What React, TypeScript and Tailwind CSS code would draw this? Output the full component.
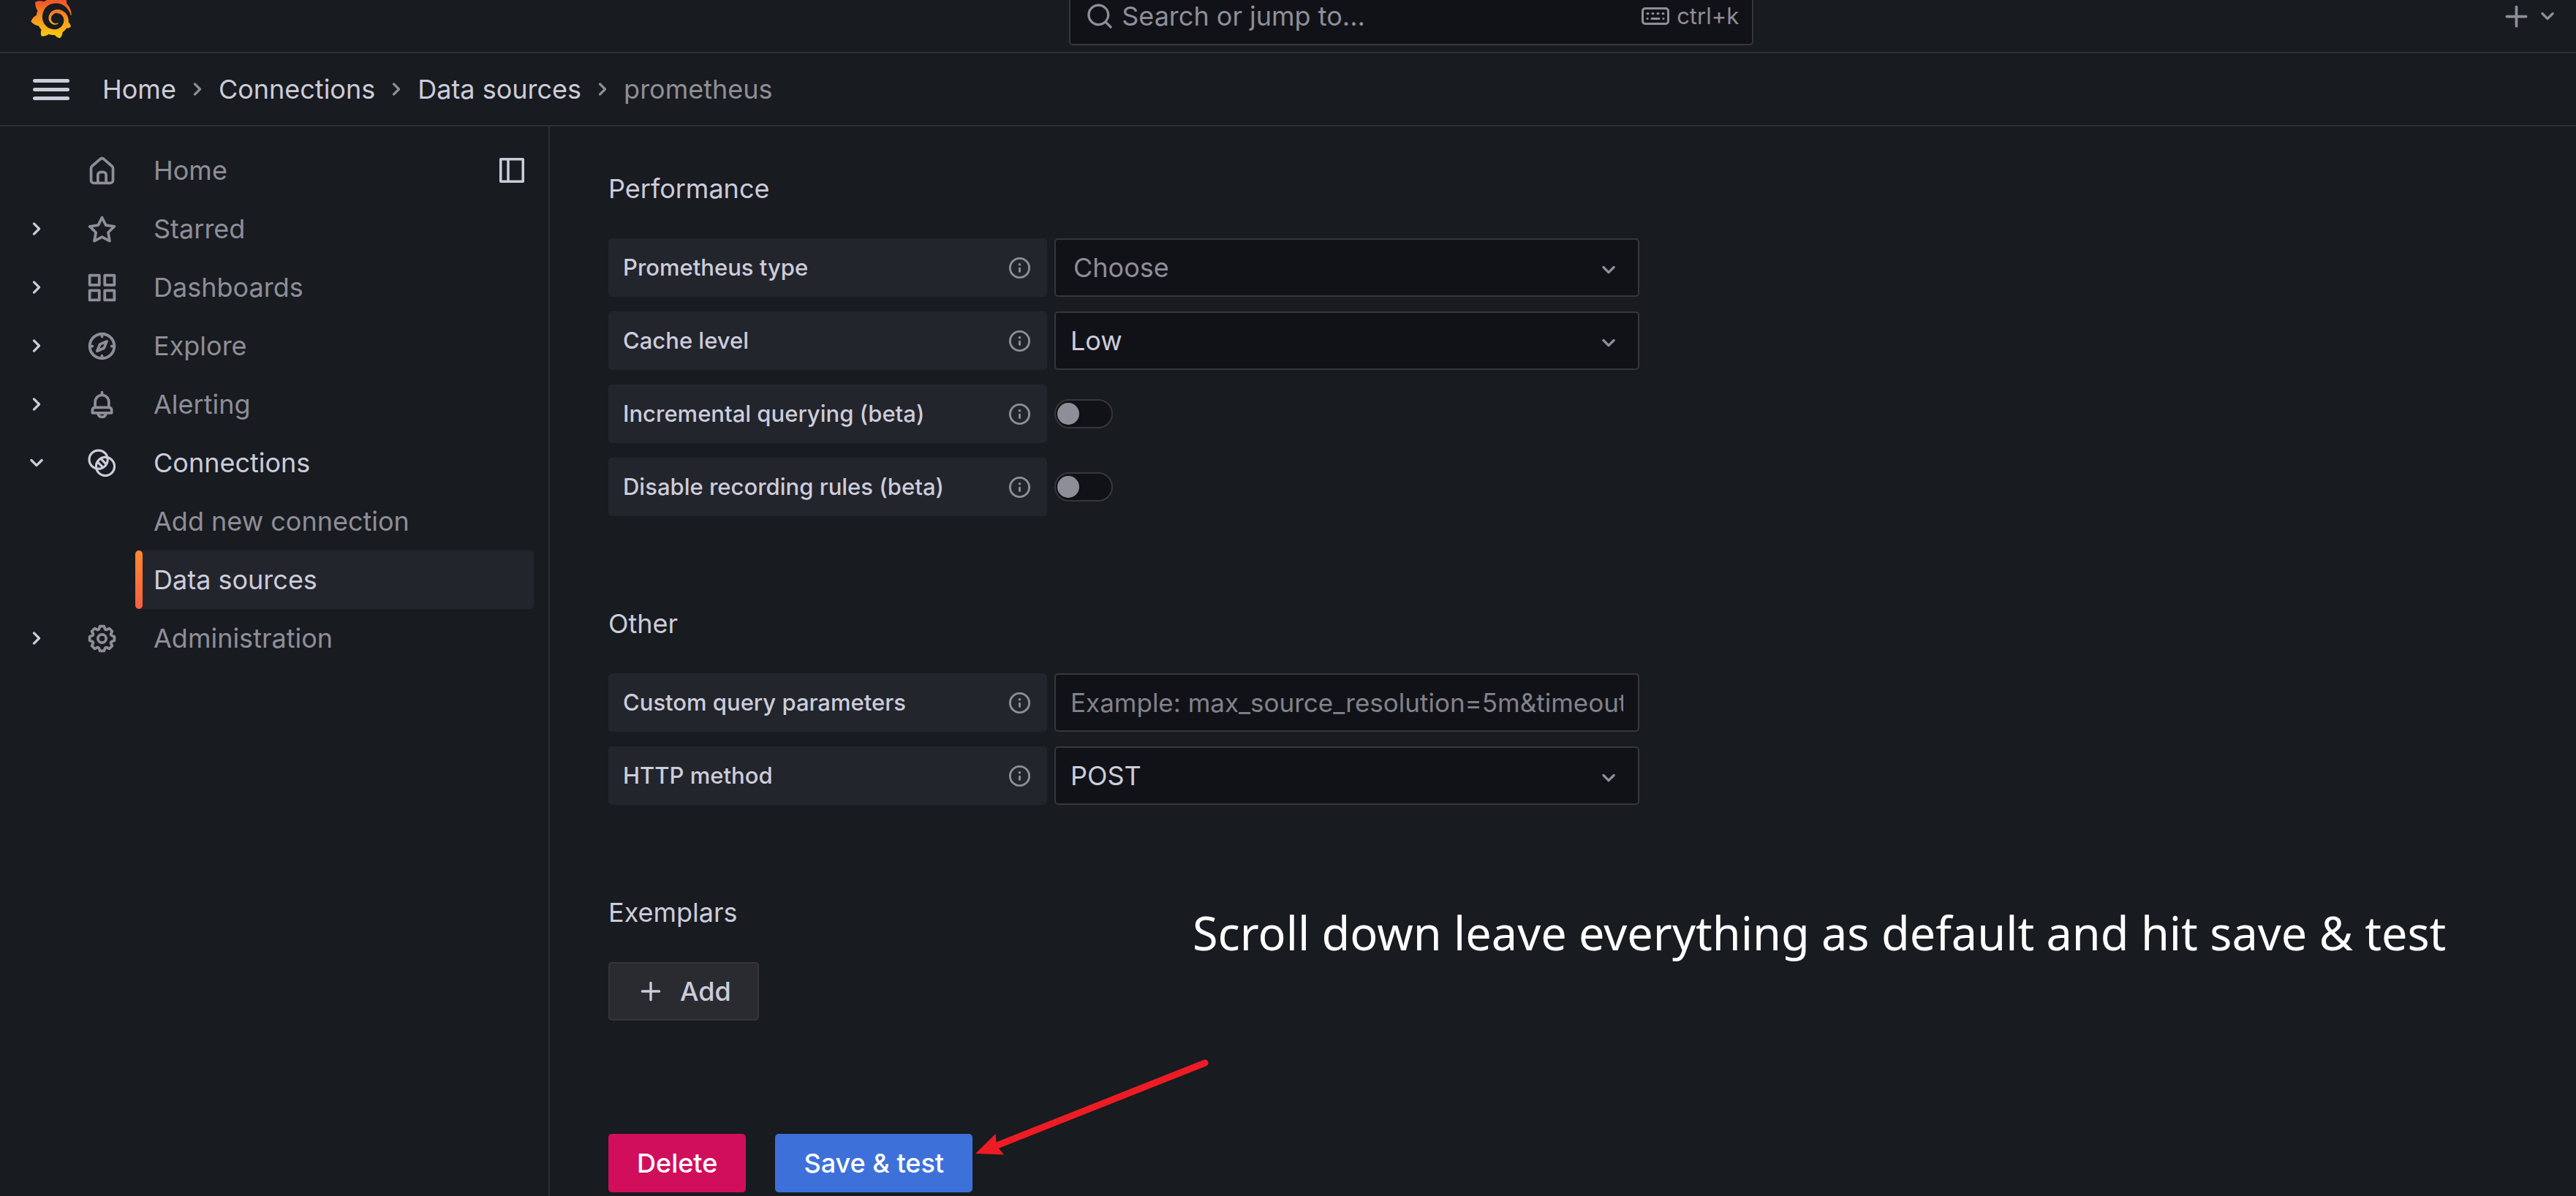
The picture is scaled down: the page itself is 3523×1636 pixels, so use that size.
import type { ReactNode } from "react";
import { SiGrafana } from "react-icons/si";

const paths = {
  home: "M20,8h0L14,2.74a3,3,0,0,0-4,0L4,8a3,3,0,0,0-1,2.26V19a3,3,0,0,0,3,3H18a3,3,0,0,0,3-3V10.25A3,3,0,0,0,20,8ZM14,20H10V15a1,1,0,0,1,1-1h2a1,1,0,0,1,1,1Zm5-1a1,1,0,0,1-1,1H16V15a3,3,0,0,0-3-3H11a3,3,0,0,0-3,3v5H6a1,1,0,0,1-1-1V10.25a1,1,0,0,1,.34-.75l6-5.25a1,1,0,0,1,1.32,0l6,5.25a1,1,0,0,1,.34.75Z",
  star: "M22,9.67A1,1,0,0,0,21.14,9l-5.69-.83L12.9,3a1,1,0,0,0-1.8,0L8.55,8.16,2.86,9a1,1,0,0,0-.81.68,1,1,0,0,0,.25,1l4.13,4-1,5.68A1,1,0,0,0,6.9,21.44L12,18.77l5.1,2.67a.93.93,0,0,0,.46.12,1,1,0,0,0,.59-.19,1,1,0,0,0,.4-1l-1-5.68,4.13-4A1,1,0,0,0,22,9.67Zm-6.15,4a1,1,0,0,0-.29.88l.72,4.2-3.76-2a1.06,1.06,0,0,0-.94,0l-3.76,2,.72-4.2a1,1,0,0,0-.29-.88l-3-3,4.21-.61a1,1,0,0,0,.76-.55L12,5.7l1.88,3.82a1,1,0,0,0,.76.55l4.21.61Z",
  apps: "M10,13H3a1,1,0,0,0-1,1v7a1,1,0,0,0,1,1h7a1,1,0,0,0,1-1V14A1,1,0,0,0,10,13ZM9,20H4V15H9ZM21,2H14a1,1,0,0,0-1,1v7a1,1,0,0,0,1,1h7a1,1,0,0,0,1-1V3A1,1,0,0,0,21,2ZM20,9H15V4h5Zm1,4H14a1,1,0,0,0-1,1v7a1,1,0,0,0,1,1h7a1,1,0,0,0,1-1V14A1,1,0,0,0,21,13Zm-1,7H15V15h5ZM10,2H3A1,1,0,0,0,2,3v7a1,1,0,0,0,1,1h7a1,1,0,0,0,1-1V3A1,1,0,0,0,10,2ZM9,9H4V4H9Z",
  compass: "M12,2A10,10,0,1,0,22,12,10,10,0,0,0,12,2Zm1,17.93V19a1,1,0,0,0-2,0v.93A8,8,0,0,1,4.07,13H5a1,1,0,0,0,0-2H4.07A8,8,0,0,1,11,4.07V5a1,1,0,0,0,2,0V4.07A8,8,0,0,1,19.93,11H19a1,1,0,0,0,0,2h.93A8,8,0,0,1,13,19.93ZM15.14,7.55l-5,2.12a1,1,0,0,0-.52.52l-2.12,5a1,1,0,0,0,.21,1.1,1,1,0,0,0,.7.29.93.93,0,0,0,.4-.09l5-2.12a1,1,0,0,0,.52-.52l2.12-5a1,1,0,0,0-1.31-1.3Zm-2.49,5.1-2.28,1,1-2.28,2.28-1Z",
  bell: "M18,13.18V10a6,6,0,0,0-5-5.91V3a1,1,0,0,0-2,0V4.09A6,6,0,0,0,6,10v3.18A3,3,0,0,0,4,16v2a1,1,0,0,0,1,1H8.14a4,4,0,0,0,7.72,0H19a1,1,0,0,0,1-1V16A3,3,0,0,0,18,13.18ZM8,10a4,4,0,0,1,8,0v3H8Zm4,10a2,2,0,0,1-1.72-1h3.44A2,2,0,0,1,12,20Zm6-3H6V16a1,1,0,0,1,1-1H17a1,1,0,0,1,1,1Z",
  cog: "M21.32,9.55l-1.89-.63.89-1.78A1,1,0,0,0,20.13,6L18,3.87a1,1,0,0,0-1.15-.19l-1.78.89-.63-1.89A1,1,0,0,0,13.5,2h-3a1,1,0,0,0-.95.68L8.92,4.57,7.14,3.68A1,1,0,0,0,6,3.87L3.87,6a1,1,0,0,0-.19,1.15l.89,1.78-1.89.63A1,1,0,0,0,2,10.5v3a1,1,0,0,0,.68.95l1.89.63-.89,1.78A1,1,0,0,0,3.87,18L6,20.13a1,1,0,0,0,1.15.19l1.78-.89.63,1.89a1,1,0,0,0,.95.68h3a1,1,0,0,0,.95-.68l.63-1.89,1.78.89A1,1,0,0,0,18,20.13L20.13,18a1,1,0,0,0,.19-1.15l-.89-1.78,1.89-.63A1,1,0,0,0,22,13.5v-3A1,1,0,0,0,21.32,9.55ZM20,12.78l-1.2.4A2,2,0,0,0,17.64,16l.57,1.14-1.1,1.1L16,17.64a2,2,0,0,0-2.79,1.16l-.4,1.2H11.22l-.4-1.2A2,2,0,0,0,8,17.64l-1.14.57-1.1-1.1L6.36,16A2,2,0,0,0,5.2,13.18L4,12.78V11.22l1.2-.4A2,2,0,0,0,6.36,8L5.79,6.89l1.1-1.1L8,6.36A2,2,0,0,0,10.82,5.2l.4-1.2h1.56l.4,1.2A2,2,0,0,0,16,6.36l1.14-.57,1.1,1.1L17.64,8a2,2,0,0,0,1.16,2.79l1.2.4ZM12,8a4,4,0,1,0,4,4A4,4,0,0,0,12,8Zm0,6a2,2,0,1,1,2-2A2,2,0,0,1,12,14Z",
  info: "M12,2A10,10,0,1,0,22,12,10.01,10.01,0,0,0,12,2Zm0,18a8,8,0,1,1,8-8A8.01,8.01,0,0,1,12,20Zm0-8.5a1,1,0,0,0-1,1v3a1,1,0,0,0,2,0v-3A1,1,0,0,0,12,11.5Zm0-4a1.25,1.25,0,1,0,1.25,1.25A1.25,1.25,0,0,0,12,7.5Z",
  search: "M21.71,20.29,18,16.61A9,9,0,1,0,16.61,18l3.68,3.68a1,1,0,0,0,1.42,0A1,1,0,0,0,21.71,20.29ZM11,18a7,7,0,1,1,7-7A7,7,0,0,1,11,18Z",
  plus: "M19,11H13V5a1,1,0,0,0-2,0v6H5a1,1,0,0,0,0,2h6v6a1,1,0,0,0,2,0V13h6a1,1,0,0,0,0-2Z",
  angleRight: "M14.83,11.29,10.59,7.05a1,1,0,0,0-1.42,0,1,1,0,0,0,0,1.41L12.71,12,9.17,15.54a1,1,0,0,0,0,1.41,1,1,0,0,0,.71.29,1,1,0,0,0,.71-.29l4.24-4.24A1,1,0,0,0,14.83,11.29Z",
  angleDown: "M17,9.17a1,1,0,0,0-1.41,0L12,12.71,8.46,9.17a1,1,0,0,0-1.41,0,1,1,0,0,0,0,1.42l4.24,4.24a1,1,0,0,0,1.42,0L17,10.59A1,1,0,0,0,17,9.17Z",
};

type IconName = keyof typeof paths;

function Icon({ name, className }: { name: IconName; className: string }) {
  return (
    <svg viewBox="0 0 24 24" fill="currentColor" aria-hidden="true" className={"shrink-0 " + className}>
      <path d={paths[name]} />
    </svg>
  );
}

function ConnectionsIcon({ className }: { className: string }) {
  return (
    <svg viewBox="0 0 24 24" fill="none" stroke="currentColor" strokeWidth="1.7" aria-hidden="true" className={"shrink-0 " + className}>
      <circle cx="9.4" cy="9.4" r="6.7" />
      <circle cx="14.4" cy="14.4" r="6.7" />
      <path d="M11.2 8.900l3.800 3.800M8.800 11.200l3.800 3.800" />
    </svg>
  );
}

function KeyboardIcon({ className }: { className: string }) {
  return (
    <svg viewBox="0 0 38 24" fill="none" stroke="currentColor" strokeWidth="3" strokeLinecap="round" aria-hidden="true" className={"shrink-0 " + className}>
      <rect x="1.500" y="1.500" width="35" height="21" rx="3.500" />
      <path d="M8 8.500h1M15 8.500h1M22 8.500h1M29 8.500h1M8 15.500h.1M14 15.500h10M29.900 15.500h.1" />
    </svg>
  );
}

function Logo() {
  return (
    <a href="#home" aria-label="Grafana" className="block h-[60px] w-[60px]">
      <svg width="0" height="0" className="absolute" aria-hidden="true">
        <linearGradient id="flame" x1="0" y1="1" x2="0" y2="0">
          <stop offset="0" stopColor="#fcce0b" />
          <stop offset="0.45" stopColor="#f7941e" />
          <stop offset="0.8" stopColor="#f15b2a" />
          <stop offset="1" stopColor="#ef4e28" />
        </linearGradient>
      </svg>
      <SiGrafana fill="url(#flame)" className="h-[60px] w-[60px]" />
    </a>
  );
}

function Crumb({ children }: { children: string }) {
  return (
    <li className="flex items-center gap-[9px]">
      <a href={"#" + children.toLowerCase().replace(" ", "-")}>{children}</a>
      <Icon name="angleRight" className="h-10 w-10 text-[#8e8e99]" />
    </li>
  );
}

function NavItem({ label, icon, toggle, active }: { label: string; icon: ReactNode; toggle?: "open" | "closed"; active?: boolean }) {
  return (
    <li className="flex h-20 items-center">
      <div className="w-[87px] pl-[30px]">
        {toggle && (
          <button type="button" aria-label={(toggle === "open" ? "Collapse " : "Expand ") + label} className="block text-[#ccccdc]">
            <Icon name={toggle === "open" ? "angleDown" : "angleRight"} className="h-10 w-10" />
          </button>
        )}
      </div>
      <a href={"#" + label.toLowerCase()} className={"flex flex-1 items-center gap-12 pl-[30px] " + (active ? "text-[#ccccdc]" : "text-[#8e8e99]")}>
        {icon}
        <span>{label}</span>
      </a>
    </li>
  );
}

const navIcon = "h-[45px] w-[45px]";

function Sidebar() {
  return (
    <nav aria-label="Main" className="w-[752px] shrink-0 border-r-2 border-[#2c2f34] pt-5">
      <ul>
        <li className="flex h-20 items-center pr-[30px] pl-[117px] text-[#8e8e99]">
          <a href="#home" className="flex flex-1 items-center gap-12">
            <Icon name="home" className={navIcon} />
            <span>Home</span>
          </a>
          <button type="button" aria-label="Undock menu" className="text-[#ccccdc]">
            <svg viewBox="0 0 40 40" fill="none" stroke="currentColor" strokeWidth="3.500" strokeLinejoin="round" className="h-10 w-10">
              <path d="M4.750 4.750h30.500v30.500H4.750zM15 4.750v30.500" />
            </svg>
          </button>
        </li>
        <NavItem label="Starred" toggle="closed" icon={<Icon name="star" className={navIcon} />} />
        <NavItem label="Dashboards" toggle="closed" icon={<Icon name="apps" className={navIcon} />} />
        <NavItem label="Explore" toggle="closed" icon={<Icon name="compass" className={navIcon} />} />
        <NavItem label="Alerting" toggle="closed" icon={<Icon name="bell" className={navIcon} />} />
        <NavItem label="Connections" toggle="open" active icon={<ConnectionsIcon className={navIcon} />} />
        <li className="flex h-20 items-center pl-[210px] text-[#8e8e99]">
          <a href="#add-new-connection">Add new connection</a>
        </li>
        <li className="mr-5 ml-[185px]">
          <a href="#data-sources" aria-current="page" className="flex h-20 items-center gap-[15px] rounded-[5px] bg-[#22252b] text-[#ccccdc]">
            <span className="h-full w-[10px] rounded-[5px] bg-linear-to-b from-[#ff8833] to-[#f55f3e]" />
            Data sources
          </a>
        </li>
        <NavItem label="Administration" toggle="closed" icon={<Icon name="cog" className={navIcon} />} />
      </ul>
    </nav>
  );
}

function Row({ id, label, children }: { id: string; label: string; children: ReactNode }) {
  return (
    <div className="flex items-center gap-[10px]">
      <div className="flex h-20 w-[600px] items-center justify-between rounded-[5px] bg-[#22252b] px-5 text-[31px] font-medium">
        <label htmlFor={id}>{label}</label>
        <Icon name="info" className="h-[35px] w-[35px] text-[#8e8e99]" />
      </div>
      {children}
    </div>
  );
}

function Select({ id, options, placeholder }: { id: string; options: string[]; placeholder?: boolean }) {
  return (
    <div className="relative w-[800px]">
      <select
        id={id}
        className={"block h-20 w-full appearance-none rounded-[5px] border-2 border-[#36373c] bg-[#111217] pr-20 " + (placeholder ? "pl-6 text-[#8e8e99]" : "pl-5 text-[#ccccdc]")}
      >
        {options.map((o) => (
          <option key={o}>{o}</option>
        ))}
      </select>
      <Icon name="angleDown" className="pointer-events-none absolute top-[23px] right-[22px] h-10 w-10 text-[#8e8e99]" />
    </div>
  );
}

function Toggle({ id }: { id: string }) {
  return (
    <span className="relative flex h-10 w-20">
      <input id={id} type="checkbox" role="switch" className="peer h-10 w-20 appearance-none rounded-full border-2 border-[#36373c] bg-[#111217]" />
      <span className="pointer-events-none absolute top-[5px] left-1 h-[30px] w-[30px] rounded-full bg-[#8e8e99] shadow-md peer-checked:left-[46px]" />
    </span>
  );
}

function Section({ title, children }: { title: string; children: ReactNode }) {
  return (
    <section>
      <h3 className="mb-[43px] leading-[50px]">{title}</h3>
      <div className="flex flex-col items-start gap-5">{children}</div>
    </section>
  );
}

export default function App() {
  return (
    <div className="relative flex min-h-screen flex-col overflow-hidden bg-[#181b1f] font-[Inter,sans-serif] text-[36px] leading-[50px] text-[#ccccdc]">
      <header className="-mt-[27px]">
        <div className="grid h-[100px] grid-cols-[13fr_936px_10fr] items-center border-b-2 border-[#2c2f34]">
          <div className="pl-10">
            <Logo />
          </div>
          <div className="flex h-20 items-center rounded-[5px] border-2 border-[#36373c] bg-[#111217] pr-[18px] pl-5 text-[#8e8e99]">
            <Icon name="search" className="mr-[10px] h-10 w-10" />
            <input aria-label="Search or jump to..." placeholder="Search or jump to..." className="min-w-0 flex-1 bg-transparent outline-none placeholder:text-[#8e8e99]" />
            <KeyboardIcon className="mr-[10px] h-6 w-[38px]" />
            <span className="text-[31px]">ctrl+k</span>
          </div>
          <button type="button" aria-label="New" className="flex items-center justify-self-end pr-[19px] text-[#8e8e99]">
            <Icon name="plus" className="h-[45px] w-[45px]" />
            <Icon name="angleDown" className="h-10 w-10" />
          </button>
        </div>
        <div className="flex h-[100px] items-center border-b-2 border-[#2c2f34] pl-[45px]">
          <button type="button" aria-label="Close menu" className="flex w-[50px] flex-col gap-[7px]">
            <span className="h-[5px] rounded-full bg-[#ccccdc]" />
            <span className="h-[5px] rounded-full bg-[#ccccdc]" />
            <span className="h-[5px] rounded-full bg-[#ccccdc]" />
          </button>
          <nav aria-label="Breadcrumbs" className="pl-[45px]">
            <ol className="flex items-center gap-[9px]">
              <Crumb>Home</Crumb>
              <Crumb>Connections</Crumb>
              <Crumb>Data sources</Crumb>
              <li aria-current="page" className="text-[#8e8e99]">prometheus</li>
            </ol>
          </nav>
        </div>
      </header>

      <div className="flex flex-1">
        <Sidebar />
        <main className="flex-1 pt-[60px] pl-20">
          <form className="flex flex-col gap-[122px]" onSubmit={(e) => e.preventDefault()}>
            <Section title="Performance">
              <Row id="ptype" label="Prometheus type">
                <Select id="ptype" placeholder options={["Choose"]} />
              </Row>
              <Row id="cache" label="Cache level">
                <Select id="cache" options={["Low", "Medium", "High", "None"]} />
              </Row>
              <Row id="incremental" label="Incremental querying (beta)">
                <Toggle id="incremental" />
              </Row>
              <Row id="recording" label="Disable recording rules (beta)">
                <Toggle id="recording" />
              </Row>
            </Section>
            <Section title="Other">
              <Row id="params" label="Custom query parameters">
                <input
                  id="params"
                  placeholder="Example: max_source_resolution=5m&timeout=10"
                  className="h-20 w-[800px] rounded-[5px] border-2 border-[#36373c] bg-[#111217] px-5 text-[35px] outline-none placeholder:text-[#82828c]"
                />
              </Row>
              <Row id="method" label="HTTP method">
                <Select id="method" options={["POST", "GET"]} />
              </Row>
            </Section>
            <Section title="Exemplars">
              <button type="button" className="flex h-20 items-center gap-5 rounded-[5px] border-2 border-[#35363b] bg-[#2a2b30] px-9 font-medium">
                <Icon name="plus" className="h-10 w-10" />
                Add
              </button>
              <div className="mt-[135px] flex gap-10 font-medium text-white">
                <button type="button" className="h-20 rounded-[5px] bg-[#d10e5c] px-[39px]">Delete</button>
                <button type="submit" className="h-20 rounded-[5px] bg-[#3d71d9] px-[39px]">Save &amp; test</button>
              </div>
            </Section>
          </form>
        </main>
      </div>

      <p className="absolute top-[1231px] left-[1631px] font-['Noto_Sans',sans-serif] text-[63px] leading-[90px] whitespace-nowrap text-white">
        Scroll down leave everything as default and hit save &amp; test
      </p>
      <svg viewBox="0 0 330 140" className="pointer-events-none absolute top-[1445px] left-[1330px] h-[140px] w-[330px]" aria-hidden="true">
        <path d="M33 122L318 9" stroke="#ed1c24" strokeWidth="9" strokeLinecap="round" />
        <path d="M4 133L31.500 106L33 122L43 134.500Z" fill="#ed1c24" />
      </svg>
    </div>
  );
}
